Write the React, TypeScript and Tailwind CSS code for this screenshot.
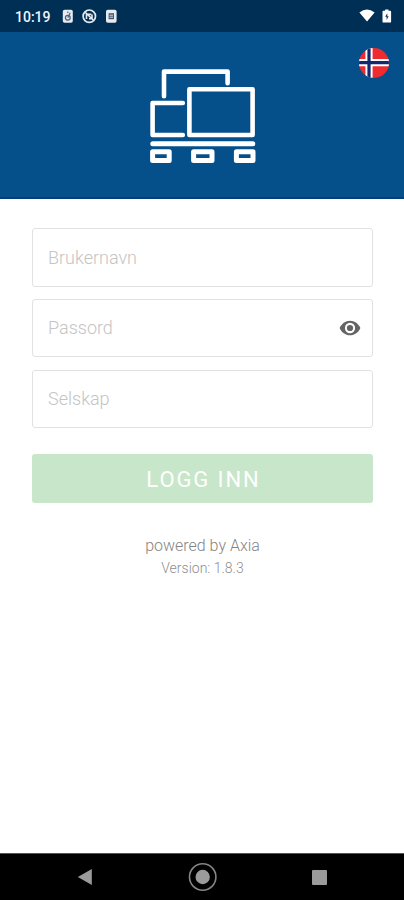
import { useState } from "react";

const fields = [
	{ name: "username", label: "Brukernavn", type: "text", size: "h-[59px]" },
	{ name: "password", label: "Passord", type: "password", size: "h-[58px]" },
	{ name: "company", label: "Selskap", type: "text", size: "mt-px h-[58px]" },
];

function StatusBar() {
	return (
		<div className="flex h-8 items-center justify-between bg-[#002f56] pl-[15px] pr-[12px] text-[#f1f5f9]">
			<div className="flex items-center">
				<span className="w-[47px] pt-px text-[14px] font-medium leading-none">
					10:19
				</span>
				<svg className="h-4 w-[56px]" viewBox="0 0 56 16" fill="none">
					<rect x="0.8" y="1.8" width="10" height="13" rx="1.8" fill="#e6ebf0" />
					<circle cx="5.8" cy="9.8" r="2.4" stroke="#4b6482" strokeWidth="1.3" />
					<path d="M5.8 3.4v1.6M5.8 9.8l2.4-5" stroke="#4b6482" strokeWidth="1.2" />
					<circle cx="27.3" cy="8.2" r="6.2" stroke="#e6ebf0" strokeWidth="1.7" />
					<path
						d="M24.5 11V6.4h4.8M30 6.6v4.2h-3M23.2 4.2l8 7.8"
						stroke="#e6ebf0"
						strokeWidth="1.6"
					/>
					<rect x="44" y="1.8" width="10.6" height="13" rx="1.8" fill="#e6ebf0" />
					<rect x="46.6" y="5.2" width="5.4" height="6" fill="#3d5775" />
					<path d="M47.5 7.2h3.6M47.5 9.2h3.6" stroke="#cbd5e0" strokeWidth="1" />
				</svg>
			</div>
			<svg className="h-4 w-[34px]" viewBox="0 0 34 16">
				<path d="M1.4 4.4Q9-1.2 16.6 4.4L9 13.6Z" fill="#fff" />
				<path
					d="M25.4 2.8h1.7V1.4h3.4v1.4h1.7q.9 0 .9.9v10q0 .9-.9.9h-6.8q-.9 0-.9-.9v-10q0-.9.9-.9z"
					fill="#fff"
				/>
				<path d="M29.3 5.2l-2.2 3.6h1.5v3.2l2.1-3.8h-1.4z" fill="#17365a" />
			</svg>
		</div>
	);
}

function NorwegianFlag() {
	return (
		<svg className="h-[30px] w-[30px]" viewBox="0 0 30 30">
			<clipPath id="flag">
				<circle cx="15" cy="15" r="15" />
			</clipPath>
			<g clipPath="url(#flag)">
				<path d="M0 0h30v30H0z" fill="#f02b2f" />
				<path d="M0 14.6h30M10 0v30" stroke="#fff" strokeWidth="7.2" />
				<path d="M0 14.6h30M10 0v30" stroke="#12286f" strokeWidth="3.2" />
			</g>
		</svg>
	);
}

function Logo() {
	return (
		<svg
			className="h-[96px] w-[108px]"
			viewBox="148 68 108 96"
			fill="none"
			stroke="#fff"
			strokeWidth="4.6"
			strokeLinecap="round"
			strokeLinejoin="round"
		>
			<path d="M164 96.3V71.6H227.6v11.6" />
			<path d="M182.8 103h-30.2v32h30.2" />
			<rect x="189.4" y="89.3" width="63.2" height="45.7" />
			<path d="M152.8 143.7h100" strokeWidth="5" />
			<rect x="152.6" y="151.7" width="16.6" height="8.8" strokeWidth="5" />
			<rect x="193.6" y="151.7" width="18.4" height="8.8" strokeWidth="5" />
			<rect x="236.4" y="151.7" width="16.6" height="8.8" strokeWidth="5" />
		</svg>
	);
}

function EyeIcon() {
	return (
		<svg className="h-[22px] w-[22px]" viewBox="0 0 24 24">
			<path
				d="M12 4C7 4 2.5 7.4.7 12 2.500 16.600 7 20 12 20s9.500-3.400 11.300-8C21.500 7.400 17 4 12 4z"
				fill="#656565"
			/>
			<circle cx="12" cy="12" r="4.5" fill="#656565" stroke="#fff" strokeWidth="2.2" />
		</svg>
	);
}

function NavigationBar() {
	return (
		<div className="flex h-[47px] items-center border-t border-[#555] bg-black">
			<svg className="ml-[77px] h-4 w-4" viewBox="0 0 16 16" fill="#9b9b9b">
				<path d="M0.8 8L14.8 0v16z" />
			</svg>
			<svg className="ml-[95px] h-[30px] w-[30px]" viewBox="0 0 30 30">
				<circle cx="14.7" cy="15" r="13.2" fill="none" stroke="#858585" strokeWidth="1.6" />
				<circle cx="14.7" cy="15" r="7.2" fill="#9b9b9b" />
			</svg>
			<div className="ml-[94px] h-[15px] w-[15px] rounded-[1px] bg-[#9b9b9b]" />
		</div>
	);
}

export default function App() {
	const [showPassword, setShowPassword] = useState(false);

	return (
		<div className="flex h-[900px] w-[404px] flex-col bg-white font-['Roboto',sans-serif]">
			<StatusBar />

			<header className="relative flex h-[167px] justify-center border-b-2 border-[#053f7b] bg-[#05508b] pt-9">
				<Logo />
				<button type="button" aria-label="Norsk" className="absolute right-[15px] top-4">
					<NorwegianFlag />
				</button>
			</header>

			<main className="flex flex-1 flex-col px-8 pt-[29px]">
				<form className="flex w-[341px] flex-col" onSubmit={(e) => e.preventDefault()}>
					<div className="flex flex-col gap-3">
						{fields.map((field) => (
							<div
								key={field.name}
								className={`${field.size} flex items-center rounded-[3px] border-[1.5px] border-[#e2e2e2] pb-px pl-[15px] pr-[11px]`}
							>
								<input
									type={field.type === "password" && !showPassword ? "password" : "text"}
									name={field.name}
									placeholder={field.label}
									className="w-full min-w-0 flex-1 text-[18px] font-light text-[#555] outline-none placeholder:text-[#c4c4c4]"
								/>
								{field.type === "password" && (
									<button
										type="button"
										aria-label="Vis passord"
										onClick={() => setShowPassword(!showPassword)}
									>
										<EyeIcon />
									</button>
								)}
							</div>
						))}
					</div>
					<button
						type="submit"
						className="mt-[26px] h-[49px] rounded-[3px] bg-[#c8e6c9] pl-0.5 pt-0.5 text-[22px] tracking-[1.9px] text-white"
					>
						LOGG INN
					</button>
				</form>

				<div className="mt-[31px] pl-px text-center font-light">
					<p className="text-[16px] leading-6 text-[#858585]">powered by Axia</p>
					<p className="text-[14px] leading-[21px] text-[#8f8f8f]">Version: 1.8.3</p>
				</div>
			</main>

			<NavigationBar />
		</div>
	);
}
